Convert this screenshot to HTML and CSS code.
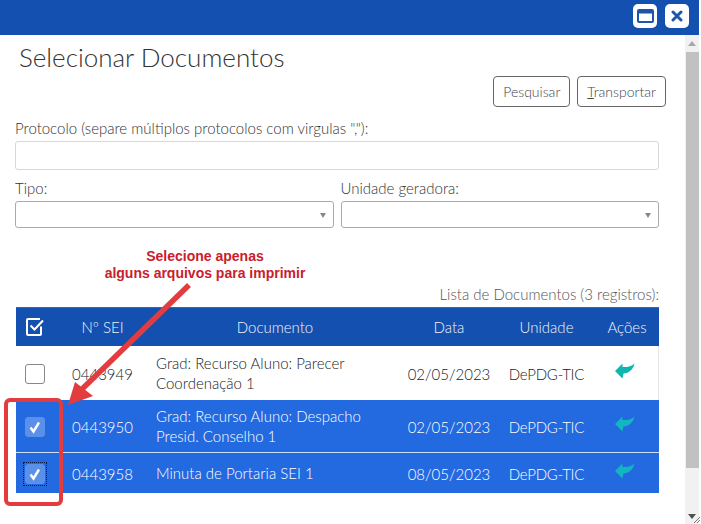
FILE: index.html
```html
<!DOCTYPE html>
<html lang="pt-BR">
<head>
<meta charset="utf-8">
<title>Selecionar Documentos</title>
<link rel="stylesheet" href="styles.css">
</head>
<body>
<div class="window">
  <header class="titlebar">
    <button class="win-btn" aria-label="Maximizar">
      <svg width="17" height="14" viewBox="0 0 17 14"><rect x="1" y="1" width="15" height="12" rx="1" fill="none" stroke="#1f55a8" stroke-width="2"/><rect x="1" y="1" width="15" height="3.5" fill="#1f55a8"/></svg>
    </button>
    <button class="win-btn" aria-label="Fechar">
      <svg width="12" height="12" viewBox="0 0 12 12"><path d="M2 2L10 10M10 2L2 10" stroke="#1f55a8" stroke-width="3" stroke-linecap="round"/></svg>
    </button>
  </header>
  <div class="body">
    <main class="content">
      <h1 class="title">Selecionar Documentos</h1>
      <div class="actions">
        <button class="btn">Pesquisar</button>
        <button class="btn"><u>T</u>ransportar</button>
      </div>
      <label class="label label-first">Protocolo (separe múltiplos protocolos com virgulas ","):</label>
      <div class="input"></div>
      <div class="selects">
        <div class="field">
          <label class="label">Tipo:</label>
          <div class="select"><span class="caret"></span></div>
        </div>
        <div class="field">
          <label class="label">Unidade geradora:</label>
          <div class="select"><span class="caret"></span></div>
        </div>
      </div>
      <div class="caption">Lista de Documentos (3 registros):</div>
      <table class="docs">
        <colgroup>
          <col class="c-check"><col class="c-sei"><col class="c-doc"><col class="c-date"><col class="c-unit"><col class="c-act">
        </colgroup>
        <thead>
          <tr>
            <th><svg class="all" width="20" height="20" viewBox="0 0 20 20"><path d="M16 9.5V17a1 1 0 0 1-1 1H3a1 1 0 0 1-1-1V3a1 1 0 0 1 1-1h12" fill="none" stroke="#fff" stroke-width="2"/><path d="M5.5 8.5L9.5 12.5L18 3.5" fill="none" stroke="#fff" stroke-width="2"/></svg></th>
            <th>Nº SEI</th><th class="doc">Documento</th><th>Data</th><th>Unidade</th><th>Ações</th>
          </tr>
        </thead>
        <tbody>
          <tr class="r1">
            <td><span class="box"></span></td>
            <td>0443949</td>
            <td class="doc">Grad: Recurso Aluno: Parecer<br>Coordenação 1</td>
            <td>02/05/2023</td><td class="unit">DePDG-TIC</td>
            <td><svg class="act" width="20" height="16" viewBox="0 0 20 16"><path d="M0 8L7.500 .5V4C12 4.500 16 3.500 19.500 .5C18.500 6 14 10.500 8.500 10.500L7.500 15.500Z" fill="#10b5ae"/></svg></td>
          </tr>
          <tr class="sel r2">
            <td><span class="box on"><svg width="14" height="14" viewBox="0 0 14 14"><path d="M2.500 7.500L5.500 11.500L11 2.500" fill="none" stroke="#fff" stroke-width="2.400"/></svg></span></td>
            <td>0443950</td>
            <td class="doc">Grad: Recurso Aluno: Despacho<br>Presid. Conselho 1</td>
            <td>02/05/2023</td><td class="unit">DePDG-TIC</td>
            <td><svg class="act" width="20" height="16" viewBox="0 0 20 16"><path d="M0 8L7.500 .5V4C12 4.500 16 3.500 19.500 .5C18.500 6 14 10.500 8.500 10.500L7.500 15.500Z" fill="#12b5c0"/></svg></td>
          </tr>
          <tr class="sel r3">
            <td><span class="focus"><span class="box on"><svg width="14" height="14" viewBox="0 0 14 14"><path d="M2.500 7.500L5.500 11.500L11 2.500" fill="none" stroke="#fff" stroke-width="2.400"/></svg></span></span></td>
            <td>0443958</td>
            <td class="doc">Minuta de Portaria SEI 1</td>
            <td>08/05/2023</td><td class="unit">DePDG-TIC</td>
            <td><svg class="act" width="20" height="16" viewBox="0 0 20 16"><path d="M0 8L7.500 .5V4C12 4.500 16 3.500 19.500 .5C18.500 6 14 10.500 8.500 10.500L7.500 15.500Z" fill="#12b5c0"/></svg></td>
          </tr>
        </tbody>
      </table>
    </main>
    <div class="scrollbar">
      <span class="arrow up"></span>
      <span class="thumb"></span>
      <span class="arrow down"></span>
    </div>
  </div>
  <div class="note">Selecione apenas<br>alguns arquivos para imprimir</div>
  <svg class="overlay" width="701" height="524" viewBox="0 0 701 524">
    <path d="M189 285L78 393" stroke="#e23c3e" stroke-width="5.500" fill="none"/>
    <path d="M68 405L75 382L93 396Z" fill="#e23c3e"/>
    <rect x="6" y="400" width="55" height="104" rx="4" fill="none" stroke="#e23c3e" stroke-width="4"/>
    <path d="M700 517L694 523M700 520L697 523" stroke="#777" stroke-width="1" fill="none"/>
  </svg>
</div>
</body>
</html>
```
FILE: styles.css
```css
* { box-sizing: border-box; }
html, body { margin: 0; padding: 0; background: #fff; overflow: hidden; }
body { font-family: "Lato", "Open Sans", sans-serif; font-weight: 300; color: #444; }
.window { position: relative; width: 701px; height: 524px; overflow: hidden; }
.titlebar { width: 699px; height: 35px; background: #1450b0; display: flex; justify-content: flex-end; align-items: flex-start; gap: 8px; padding: 4px 10px 0 0; }
.win-btn { width: 24px; height: 24px; border: 0; border-radius: 5px; padding: 0; background: #fff; display: flex; align-items: center; justify-content: center; }
.body { display: flex; height: 489px; width: 699px; }
.content { flex: 1; padding: 0 26px 0 15px; min-width: 0; }
.title { margin: 7px 0 0 4px; font-size: 26px; line-height: 30px; font-weight: 300; color: #333; }
.actions { display: flex; justify-content: flex-end; gap: 7px; margin: 4px -7px 0 0; }
.btn { height: 31px; padding: 0 9px; background: #fff; border: 1px solid #666; border-radius: 4px; font: 300 14px "Lato", sans-serif; color: #444; }
.label { display: block; font-size: 15px; line-height: 18px; color: #333; height: 18px; }
.label-first { margin-top: 12px; }
.input { height: 29px; margin-top: 4px; border: 1px solid #d8d8d8; border-radius: 3px; background: #fff; }
.selects { display: flex; gap: 7px; margin-top: 9px; }
.field { flex: 1; min-width: 0; }
.select { position: relative; height: 27px; margin-top: 4px; border: 1px solid #aaa; border-radius: 3px; background: #fff; }
.caret { position: absolute; right: 7px; top: 11px; border: 3px solid transparent; border-top: 5px solid #888; border-bottom: 0; }
.caption { margin-top: 57px; height: 22px; line-height: 18px; text-align: right; font-size: 15px; color: #555; }
.docs { width: 643px; margin-left: 1px; border-collapse: collapse; table-layout: fixed; border-top: 1px solid #5b6b4a; font-size: 15px; }
.c-check { width: 44px; } .c-sei { width: 85px; } .c-doc { width: 255px; } .c-date { width: 98px; } .c-unit { width: 97px; } .c-act { width: 64px; }
.docs th { height: 38px; padding: 0; background: #1450b0; color: #f0f4fb; font-weight: 300; font-size: 15px; text-align: center; }
.docs td { padding: 2px 0 0; text-align: center; vertical-align: middle; line-height: 20px; color: #222; }
.docs td.doc { padding: 1px 6px 0 11px; text-align: left; }
.docs th.doc { padding: 0 6px 0 11px; }
.docs td.unit { letter-spacing: -.2px; }
.r1 td { height: 54px; }
.r1 { box-shadow: inset -1px 0 0 #e4e4e4; }
.r2 td { height: 53px; border-bottom: 1px solid #cfe0fa; }
.r3 td { height: 40px; }
.docs .sel td { background: #2369df; color: #fff; }
.all { display: block; margin: 0 auto 0 9px; }
.box { display: block; width: 20px; height: 20px; margin-left: 9px; background: #fff; border: 1px solid #888; border-radius: 3px; }
.box.on { background: #5a8fea; border-color: #5a8fea; display: flex; align-items: center; justify-content: center; margin: 0; }
.r2 .box.on { margin-left: 9px; }
.focus { display: block; width: 24px; height: 24px; margin-left: 7px; padding: 1px; border: 1px dotted #0a1a40; }
.act { display: block; margin: -6px auto 0 auto; position: relative; left: -2px; }
.scrollbar { width: 14px; background: #f1f1f1; display: flex; flex-direction: column; align-items: center; position: relative; }
.arrow { width: 0; height: 0; border: 4px solid transparent; }
.arrow.up { border-bottom: 5px solid #a8a8a8; border-top: 0; margin-top: 6px; }
.arrow.down { border-top: 5px solid #505050; border-bottom: 0; margin-top: 46px; }
.thumb { width: 13px; height: 416px; margin-top: 6px; background: #c1c1c1; }
.note { position: absolute; left: 75px; top: 248px; width: 260px; text-align: center; font: 700 14px/17px "Liberation Sans", sans-serif; color: #c9202c; }
.overlay { position: absolute; left: 0; top: 0; pointer-events: none; }
```
